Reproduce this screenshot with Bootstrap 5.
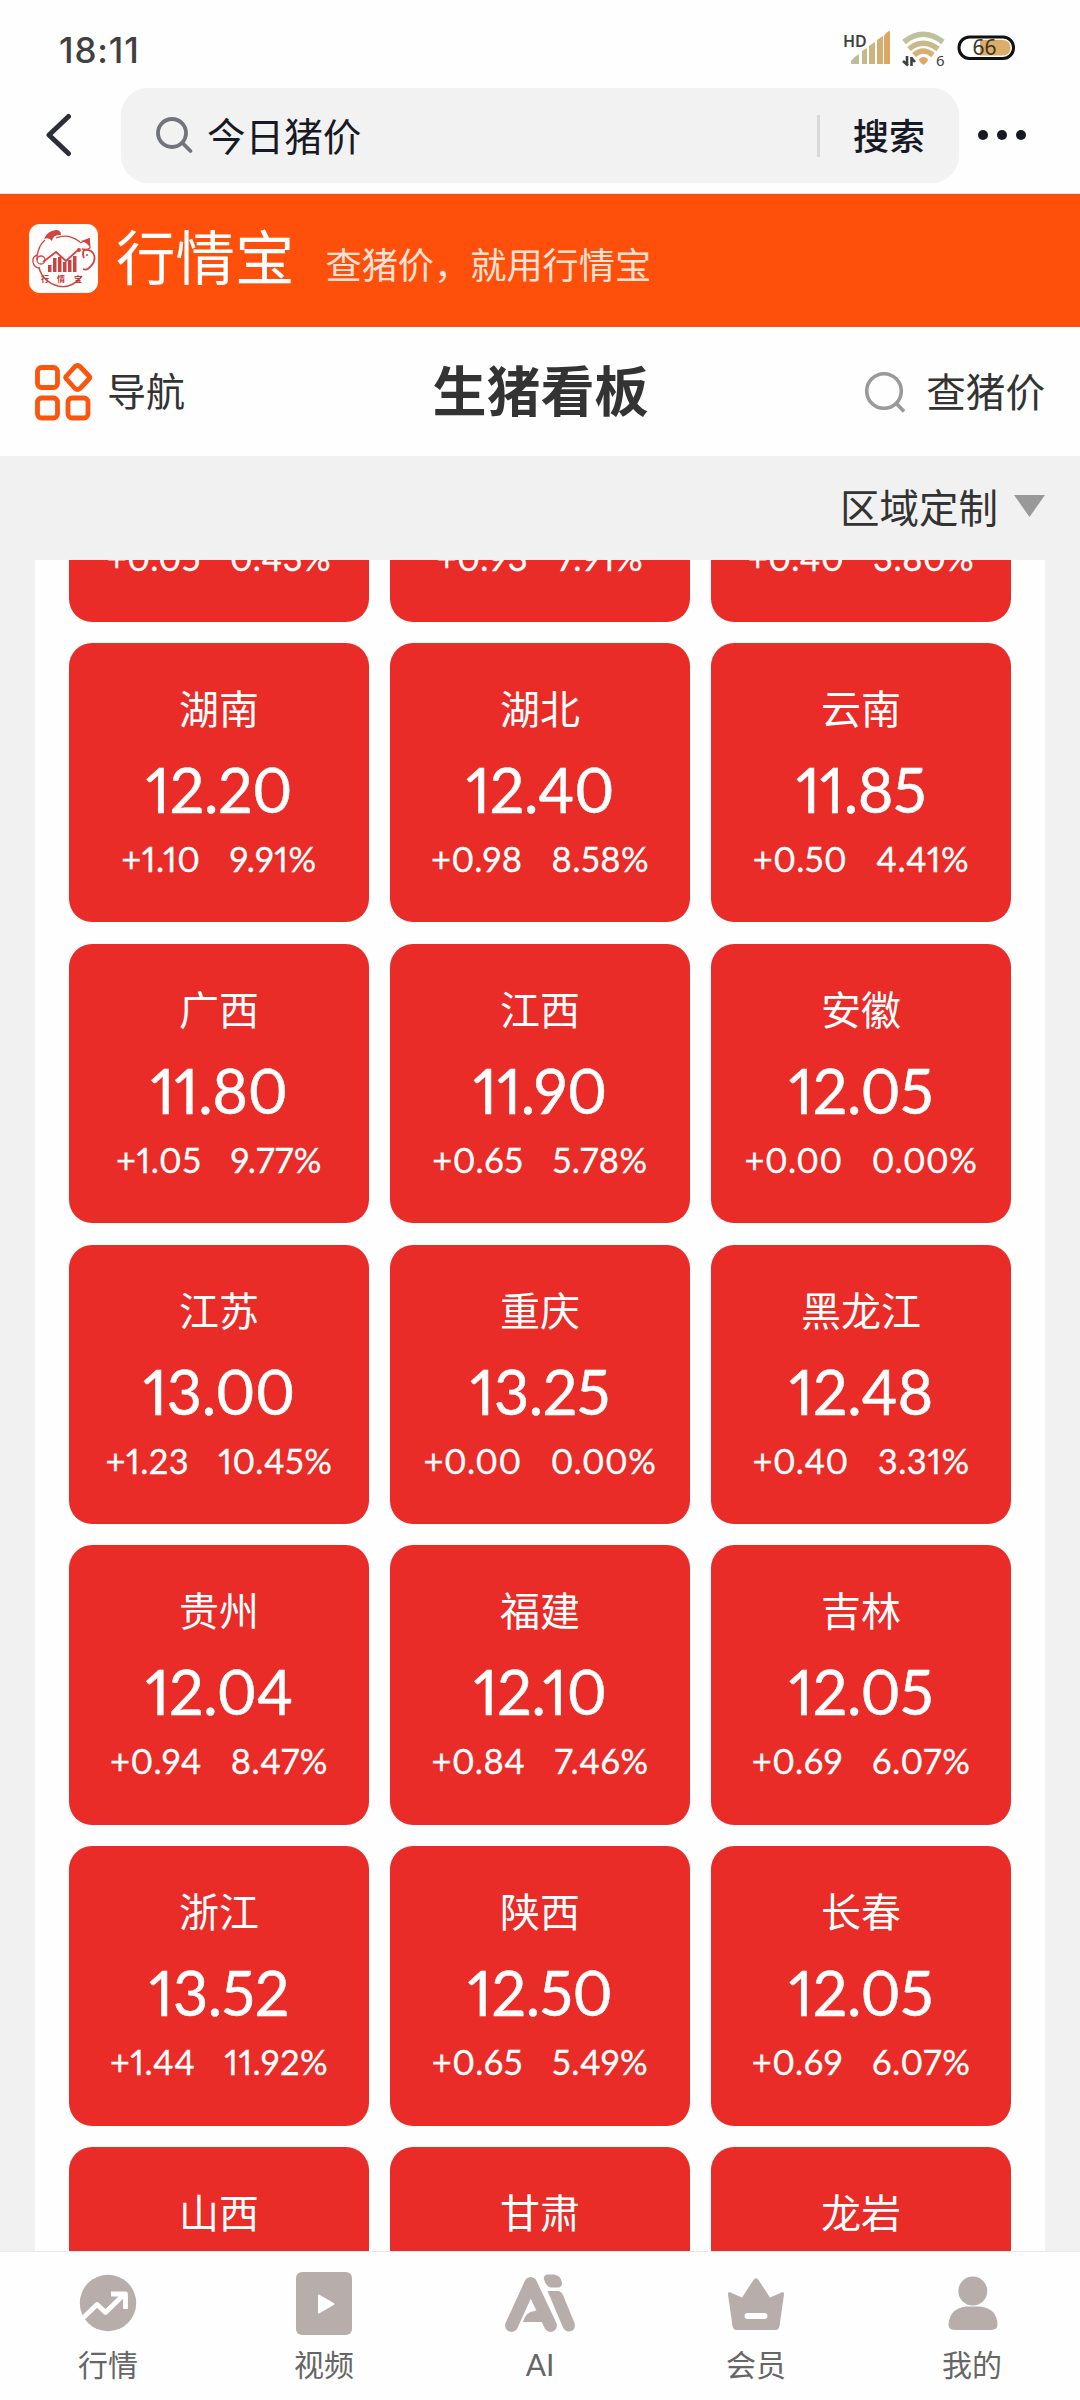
<!DOCTYPE html>
<html lang="zh-CN">
<head>
<meta charset="utf-8">
<meta name="viewport" content="width=device-width, initial-scale=1">
<title>生猪看板</title>
<link href="https://cdn.jsdelivr.net/npm/bootstrap@5.3.0/dist/css/bootstrap.min.css" rel="stylesheet">
<style>
  body { width: 1080px; height: 2400px; overflow: hidden; background: #f1f1f1; color: #333; font-family: Lato, "Noto Sans CJK SC", sans-serif; line-height: 1; }
  svg { display: block; flex: none; }
  .status-bar { height: 88px; padding: 13px 62px 0 59px; background: #fefefe; }
  .status-bar svg { margin-top: -1px; }
  .clock { font: 500 35px/1 Inter, sans-serif; letter-spacing: .9px; color: #404040; }
  .search-bar { height: 106px; background: #fefefe; padding: 0 54px 11px 45px; border-bottom: 1px solid #e3e3e3; }
  .search-box { width: 838px; height: 95px; margin-left: 49px; border-radius: 27px; background: #f2f2f2; padding: 2px 34px 0 35px; color: #171a25; }
  .search-box .query { font-size: 38.6px; margin-left: 13px; }
  .search-box .divider { width: 3px; height: 42px; background: #d8d8d8; margin-right: 33px; }
  .search-box .go { font-size: 36px; font-weight: 500; }
  .brand-bar { height: 133px; background: #ff500b; color: #fff; padding: 0 29px; }
  .brand-bar svg { margin-top: -5px; }
  .brand-name { font-size: 59.5px; margin: -6px 0 0 18px; }
  .brand-tag { font-size: 36.2px; margin: 10px 0 0 31px; color: #ffe2d6; }
  .title-bar { height: 129px; background: #fefefe; padding: 0 35px 0 34px; font-size: 39.6px; }
  .title-bar h1 { font-size: 54px; font-weight: 700; margin: 0 0 0 2px; line-height: 1; }
  .side { width: 300px; }
  .nav-word { margin-left: 13px; font-size: 39px; }
  .filter-bar { height: 104px; font-size: 39.5px; padding: 0 35px; }
  .board { height: 1691px; margin: 0 35px; padding: 0 34px; background: #fefefe; overflow: hidden; }
  .tiles { display: grid; grid-template-columns: repeat(3, 300px); gap: 21.4px 21px; margin-top: -217.8px; }
  .tile { height: 279.4px; border-radius: 23px; background: #e92c27; color: #fff; padding-top: 46px; }
  .region { font-size: 40px; line-height: 40px; }
  .price { font: 400 61px/60px Lato, sans-serif; font-feature-settings: "pnum"; letter-spacing: -.3px; margin-top: 31px; -webkit-text-stroke: .5px #fff; }
  .change { font: 400 34.5px/36px Lato, sans-serif; font-feature-settings: "pnum"; letter-spacing: .5px; margin-top: 21px; gap: 29px; -webkit-text-stroke: .3px #fff; }
  .tabs-bar { height: 149px; border-top: 1px solid #e8e8e8; background: #fefefe; color: #666; font-size: 30px; padding-top: 10px; }
  .tabs-bar span { margin-top: 7px; }
</style>
</head>
<body>
<header>
  <div class="status-bar d-flex align-items-center justify-content-between">
    <span class="clock">18:11</span>
    <svg width="178" height="40" viewBox="0 0 178 40">
      <text x="3" y="17" font-family="Noto Sans, sans-serif" font-weight="600" font-size="16" fill="#404040">HD</text>
      <path d="M11 31q4-5 8-7v10h-7q-1 0-1-1z" fill="#bdbe96"/><path d="M22 21l5-3v16h-5z" fill="#c4b98a"/><path d="M29 16l6-4v22h-6z" fill="#cbb47f"/><path d="M37 10l6-4v28h-6z" fill="#d3ae71"/><path d="M44 6q3-5 6-5v33h-6z" fill="#dba763"/>
      <g fill="none" stroke-width="5.500"><path d="M64 12Q83-3.500 103 12" stroke="#bfc19b"/><path d="M69 19Q83 7.500 98 19" stroke="#c8b988"/><path d="M74 25Q83 17 93 25" stroke="#d4b074"/></g>
      <path d="M79 29q4.500-4 9 0q0 3-4.500 6q-4.500-3-4.500-6z" fill="#dea964"/>
      <path d="M67 26v9.500M68 35.500l-5-4.500M71.500 36v-9M71 27.500l4 4.500" stroke="#404040" stroke-width="2.600" fill="none"/>
      <text x="96" y="35.500" font-family="Noto Sans, sans-serif" font-size="15" fill="#404040">6</text>
      <rect x="119" y="7" width="54.500" height="21.500" rx="10.500" fill="#fff" stroke="#111" stroke-width="3"/>
      <path d="M140 10h22.500q8 0 8 7.700t-8 7.700H140z" fill="#dcad69"/>
      <text x="144.500" y="25" text-anchor="middle" font-family="Noto Sans, sans-serif" font-size="21" fill="#3c3524">66</text>
    </svg>
  </div>
  <div class="search-bar d-flex align-items-center">
    <svg width="27" height="44" viewBox="0 0 27 44"><path d="M23.500 3.500L4 22l19.500 18.500" fill="none" stroke="#2c2f38" stroke-width="5" stroke-linecap="round" stroke-linejoin="round"/></svg>
    <div class="search-box d-flex align-items-center">
      <svg width="38" height="38" viewBox="0 0 38 38"><g fill="none" stroke="#72747c" stroke-width="3.800" stroke-linecap="round"><circle cx="16" cy="16" r="14"/><path d="M27 26.500l7.500 7.500"/></g></svg>
      <span class="query flex-grow-1">今日猪价</span>
      <span class="divider"></span>
      <span class="go">搜索</span>
    </div>
    <svg class="ms-auto" width="50" height="12" viewBox="0 0 50 12" fill="#171a25"><circle cx="7" cy="6" r="5"/><circle cx="26" cy="6" r="5"/><circle cx="45" cy="6" r="5"/></svg>
  </div>
  <div class="brand-bar d-flex align-items-center">
    <svg width="69" height="69" viewBox="0 0 69 69">
      <rect width="69" height="69" rx="11" fill="#fffdfc"/>
      <g fill="none" stroke="#cf4543" stroke-width="1.300"><path d="M16 16Q8 23 8 36M27 14Q39 9 51 18M10 44Q14 58 29 62Q43 65 53 52"/><circle cx="12" cy="36" r="4"/><path d="M9 31q-6 1-5 7t7 6"/><path d="M51 19l9-4l1 9q-3 2-8 1"/><path d="M55 26q8-1 10 5t-3 11q-4 5-8 3M55 26q-2 4 0 8" stroke-width="1.800"/><path d="M14 38L27 28l10 9L50 25" stroke-width="1.800"/></g>
      <path d="M15 15q3-8 12-9q5 0 5 5q-8-1-9 6q-3-4-8-2z" fill="#cf4543"/><path d="M52 17l9-3l-1 8q-3-4-8-5z" fill="#cf4543"/>
      <path d="M19 41h3.500v7H19zM24 34h3.500v14H24zM29 33h3.500v15H29zM34 38h3.500v10H34zM39 36h3.500v12H39zM44 32h3.500v16H44z" fill="#c94340"/>
      <circle cx="50" cy="26" r="2" fill="#cf4543"/><circle cx="58" cy="31" r="1" fill="#cf4543"/>
      <g font-family="Noto Sans CJK SC, sans-serif" font-weight="700" font-size="8" fill="#b93a38"><text x="12" y="58">行</text><text x="28" y="58">情</text><text x="45" y="58">宝</text></g>
    </svg>
    <span class="brand-name">行情宝</span>
    <span class="brand-tag">查猪价，就用行情宝</span>
  </div>
  <div class="title-bar d-flex align-items-center justify-content-between">
    <div class="side d-flex align-items-center">
      <svg width="60" height="60" viewBox="0 0 60 60" fill="none" stroke="#f9560f" stroke-width="4.800" stroke-linejoin="round"><rect x="3.500" y="5.500" width="20" height="20" rx="4"/><path d="M43.500 3.500q1.500 0 2.500 1l9 9.500q1.500 1.500 0 3l-9 9.500q-2.500 2-5 0l-8.500-9.500q-1.500-1.500 0-3l8.500-9.500q1-1 2.500-1z"/><rect x="3.500" y="36" width="20" height="20" rx="4"/><rect x="34" y="36" width="20" height="20" rx="4"/></svg>
      <span class="nav-word">导航</span>
    </div>
    <h1>生猪看板</h1>
    <div class="side d-flex align-items-center justify-content-end">
      <svg width="42" height="42" viewBox="0 0 42 42"><g fill="none" stroke="#999" stroke-width="3.600"><circle cx="20" cy="20" r="17.300"/><path d="M32 32l8 8.500"/></g></svg>
      <span class="ms-3 ps-1">查猪价</span>
    </div>
  </div>
</header>
<div class="filter-bar d-flex align-items-center justify-content-end">
  <span>区域定制</span>
  <svg class="ms-3 mb-1" width="31" height="22" viewBox="0 0 31 22"><path d="M0 0h31L15.500 22z" fill="#999"/></svg>
</div>
<main class="board"><div class="tiles" id="tiles"></div></main>
<nav class="tabs-bar row g-0 text-center">
  <div class="col d-flex flex-column align-items-center">
    <svg width="80" height="80" viewBox="0 0 80 80"><circle cx="40" cy="41" r="28.200" fill="#b7aeac"/><path d="M13.500 57.500L29 42.500l8.500 8L57 31.500M43 32h14.500v15" fill="none" stroke="#fff" stroke-width="4.800" stroke-linejoin="round"/></svg>
    <span>行情</span>
  </div>
  <div class="col d-flex flex-column align-items-center">
    <svg width="80" height="80" viewBox="0 0 80 80"><rect x="12" y="10" width="56" height="63" rx="6" fill="#b7aeac"/><path d="M35 33.500l14.500 8.500L35 50.500z" fill="#fff" stroke="#fff" stroke-width="2" stroke-linejoin="round"/></svg>
    <span>视频</span>
  </div>
  <div class="col d-flex flex-column align-items-center">
    <svg width="80" height="80" viewBox="0 0 80 80"><path d="M11.500 63.500L30.700 21.500L50.500 63.500" fill="none" stroke="#b7aeac" stroke-width="12.800" stroke-linecap="round" stroke-linejoin="round"/><path d="M22 60q3-11 13-11.500h6l6 11.500z" fill="#b7aeac"/><path d="M22.200 60q3-11 13-11.500" fill="none" stroke="#fff" stroke-width="1.200"/><path d="M47.500 29h10q3.500 0 5.500 4l11.500 28q1.500 5-2 7.500q-6 3-9.500-3z" fill="#b7aeac"/><path d="M47 12.500h7q7 1 8 8q0 5-4 5h-7q-5-1-7-8q-1-4 3-5z" fill="#b7aeac"/></svg>
    <span>AI</span>
  </div>
  <div class="col d-flex flex-column align-items-center">
    <svg width="80" height="80" viewBox="0 0 80 80"><path d="M37.500 18q2.500-3.500 5 0L54 35.500l11.500-5q3-1 2.500 2L63.500 64q-.7 4-4 4h-39q-3.300 0-4-4L12 32.500q-.5-3 2.500-2L26 35.500z" fill="#b7aeac"/><rect x="28.500" y="51" width="23" height="6" rx="3" fill="#fff"/></svg>
    <span>会员</span>
  </div>
  <div class="col d-flex flex-column align-items-center">
    <svg width="80" height="80" viewBox="0 0 80 80" fill="#b7aeac"><circle cx="40.800" cy="29" r="14.500"/><path d="M34 44.500h14q17 2 17.500 18q0 5.500-7 5.500h-35q-7 0-7-5.500Q17.500 46.500 34 44.500z"/></svg>
    <span>我的</span>
  </div>
</nav>
<script>
  const rows = [
    ['', '', '+0.05', '0.43%'], ['', '', '+0.93', '7.91%'], ['', '', '+0.40', '3.80%'],
    ['湖南', '12.20', '+1.10', '9.91%'], ['湖北', '12.40', '+0.98', '8.58%'], ['云南', '11.85', '+0.50', '4.41%'],
    ['广西', '11.80', '+1.05', '9.77%'], ['江西', '11.90', '+0.65', '5.78%'], ['安徽', '12.05', '+0.00', '0.00%'],
    ['江苏', '13.00', '+1.23', '10.45%'], ['重庆', '13.25', '+0.00', '0.00%'], ['黑龙江', '12.48', '+0.40', '3.31%'],
    ['贵州', '12.04', '+0.94', '8.47%'], ['福建', '12.10', '+0.84', '7.46%'], ['吉林', '12.05', '+0.69', '6.07%'],
    ['浙江', '13.52', '+1.44', '11.92%'], ['陕西', '12.50', '+0.65', '5.49%'], ['长春', '12.05', '+0.69', '6.07%'],
    ['山西', '', '', ''], ['甘肃', '', '', ''], ['龙岩', '', '', '']
  ];
  // The first row is scrolled up so only its change line shows; the last row shows only names.
  document.getElementById('tiles').innerHTML = rows.map(([name, price, diff, pct]) => `
    <div class="tile text-center">
      <div class="region">${name || '&nbsp;'}</div>
      <div class="price">${price || '&nbsp;'}</div>
      <div class="change d-flex justify-content-center"><span>${diff}</span><span>${pct}</span></div>
    </div>`).join('');
</script>
<script src="https://cdn.jsdelivr.net/npm/bootstrap@5.3.0/dist/js/bootstrap.bundle.min.js"></script>
</body>
</html>
